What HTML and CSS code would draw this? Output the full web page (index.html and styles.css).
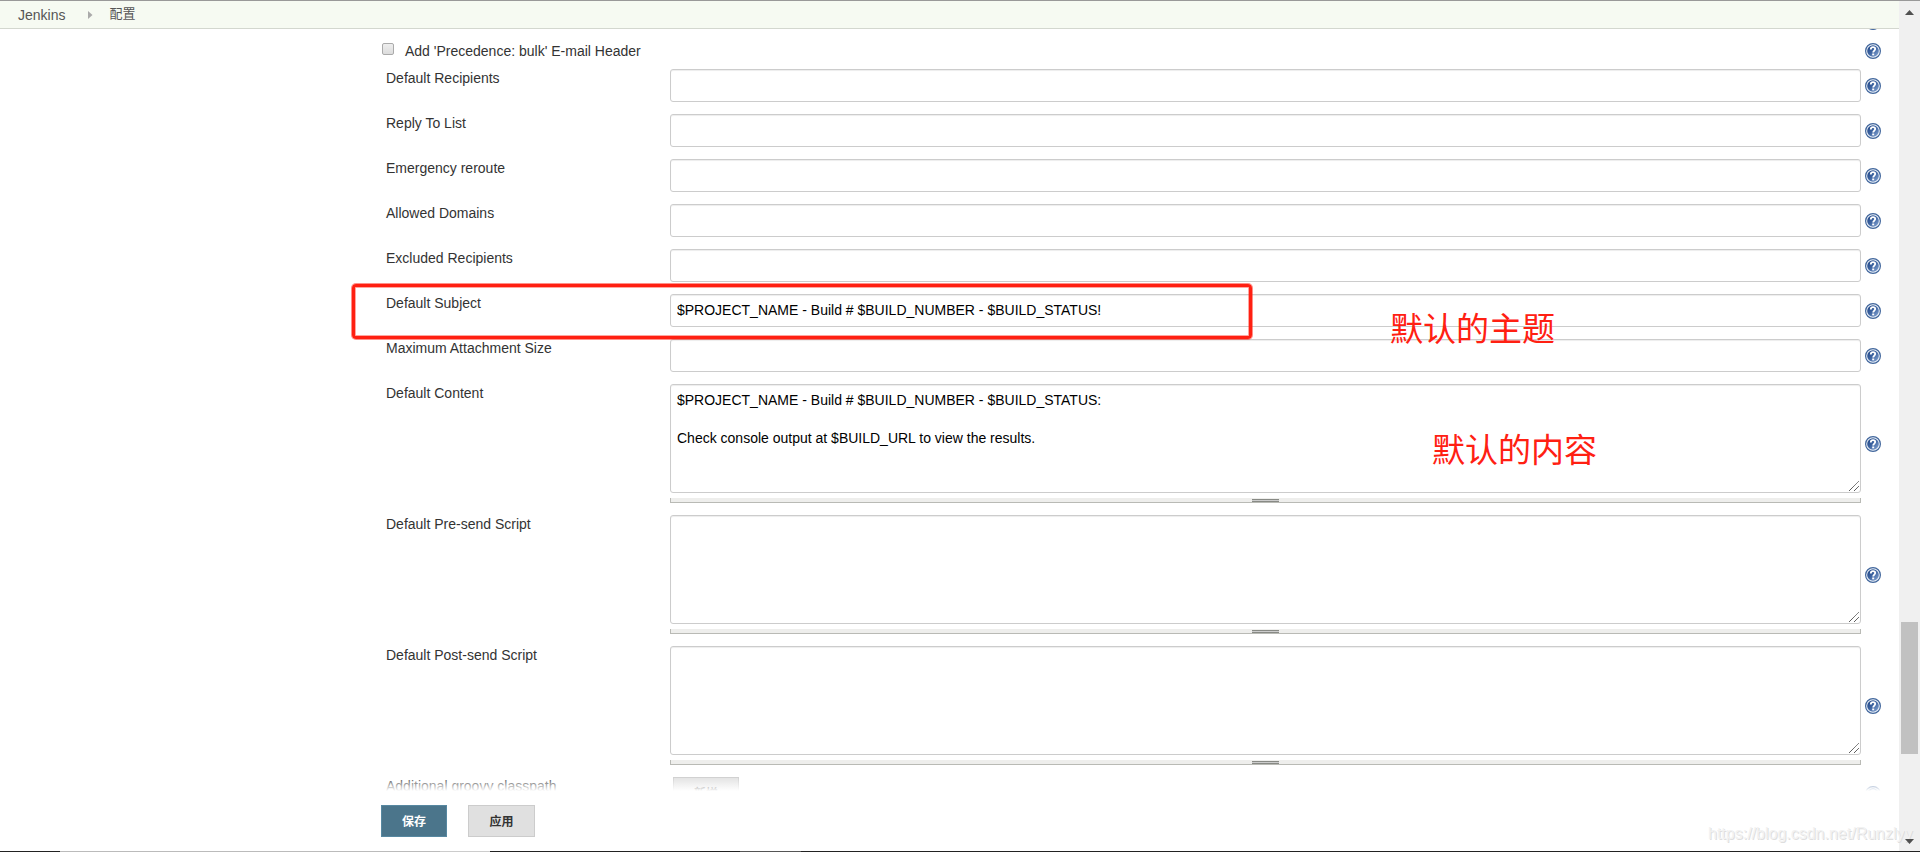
FILE: index.html
```
<!DOCTYPE html>
<html lang="zh">
<head>
<meta charset="utf-8">
<title>配置 [Jenkins]</title>
<link rel="stylesheet" href="styles.css">
</head>
<body>
<svg class="defs" width="0" height="0">
  <defs>
    <linearGradient id="ball" x1="0" y1="0" x2="1" y2="1">
      <stop offset="0" stop-color="#1f4484"/>
      <stop offset=".45" stop-color="#3a619f"/>
      <stop offset="1" stop-color="#8aa8d4"/>
    </linearGradient>
    <symbol id="help" viewBox="0 0 16 16">
      <circle cx="8" cy="8" r="7.4" fill="#eef3f9" stroke="#41669c" stroke-width="1.2"/>
      <circle cx="8" cy="8" r="5.8" fill="url(#ball)"/>
      <path d="M5.8 6.4C5.8 4.9 6.7 4.2 8 4.2S10.200 4.900 10.200 6.100C10.200 7.500 8.200 7.700 8.200 9.600" fill="none" stroke="#fff" stroke-width="1.8"/>
      <path d="M7.200 10.500H9.200V12.300H7.200Z" fill="#fff"/>
    </symbol>
    <symbol id="grip" viewBox="0 0 10 10">
      <path d="M0 10L10 0M5 10l5-5" fill="none" stroke="#444" stroke-width="1" stroke-dasharray="1.2 .3"/>
    </symbol>
  </defs>
</svg>

<div class="window">
  <div class="page">
    <header class="breadcrumbs">
      <span>Jenkins</span>
      <svg width="5" height="8" viewBox="0 0 5 8"><path d="M0 0l4.500 4L0 8z" fill="#aaa"/></svg>
      <span class="crumb-cn">配置</span>
    </header>

    <main class="config">
      <div class="row row-check">
        <label class="check"><i class="checkbox"></i>Add 'Precedence: bulk' E-mail Header</label>
        <svg class="help"><use href="#help"/></svg>
        <svg class="help help-prev"><use href="#help"/></svg>
      </div>
      <div class="row">
        <label class="name">Default Recipients</label>
        <input class="setting" type="text">
        <svg class="help"><use href="#help"/></svg>
      </div>
      <div class="row">
        <label class="name">Reply To List</label>
        <input class="setting" type="text">
        <svg class="help"><use href="#help"/></svg>
      </div>
      <div class="row">
        <label class="name">Emergency reroute</label>
        <input class="setting" type="text">
        <svg class="help"><use href="#help"/></svg>
      </div>
      <div class="row">
        <label class="name">Allowed Domains</label>
        <input class="setting" type="text">
        <svg class="help"><use href="#help"/></svg>
      </div>
      <div class="row">
        <label class="name">Excluded Recipients</label>
        <input class="setting" type="text">
        <svg class="help"><use href="#help"/></svg>
      </div>
      <div class="row">
        <label class="name">Default Subject</label>
        <input class="setting" type="text" value="$PROJECT_NAME - Build # $BUILD_NUMBER - $BUILD_STATUS!">
        <svg class="help"><use href="#help"/></svg>
      </div>
      <div class="row">
        <label class="name">Maximum Attachment Size</label>
        <input class="setting" type="text">
        <svg class="help"><use href="#help"/></svg>
      </div>
      <div class="row row-area">
        <label class="name">Default Content</label>
        <div class="area">
          <textarea class="setting">$PROJECT_NAME - Build # $BUILD_NUMBER - $BUILD_STATUS:

Check console output at $BUILD_URL to view the results.</textarea>
          <svg class="grip"><use href="#grip"/></svg>
          <div class="handle"><i></i></div>
        </div>
        <svg class="help"><use href="#help"/></svg>
      </div>
      <div class="row row-area">
        <label class="name">Default Pre-send Script</label>
        <div class="area">
          <textarea class="setting"></textarea>
          <svg class="grip"><use href="#grip"/></svg>
          <div class="handle"><i></i></div>
        </div>
        <svg class="help"><use href="#help"/></svg>
      </div>
      <div class="row row-area">
        <label class="name">Default Post-send Script</label>
        <div class="area">
          <textarea class="setting"></textarea>
          <svg class="grip"><use href="#grip"/></svg>
          <div class="handle"><i></i></div>
        </div>
        <svg class="help"><use href="#help"/></svg>
      </div>
      <div class="row">
        <label class="name">Additional groovy classpath</label>
        <div class="add"><button class="btn">新增</button></div>
        <svg class="help"><use href="#help"/></svg>
      </div>
    </main>

    <!-- sticky save bar, form fades out above it -->
    <footer class="bottom">
      <button class="btn primary">保存</button>
      <button class="btn">应用</button>
    </footer>
  </div>

  <aside class="scrollbar">
    <svg width="9" height="5" viewBox="0 0 9 5"><path d="M0 5L4.500 0 9 5z" fill="#505050"/></svg>
    <div class="thumb"></div>
    <svg width="9" height="5" viewBox="0 0 9 5"><path d="M0 0l4.500 5L9 0z" fill="#505050"/></svg>
  </aside>

  <div class="mark-box"></div>
  <div class="mark mark-subject">默认的主题</div>
  <div class="mark mark-content">默认的内容</div>
  <div class="watermark">https://blog.csdn.net/Runzlyy</div>
  <div class="taskbar"></div>
</div>
</body>
</html>
```
FILE: styles.css
```
* {
    box-sizing: border-box;
}

body {
    margin: 0;
    font-family: "Liberation Sans", Arial, "Noto Sans CJK SC", sans-serif;
    font-size: 14px;
    color: #333;
    background: #fff;
}

svg {
    display: block;
}

.defs {
    position: absolute;
}

.window {
    position: relative;
    display: flex;
    height: 852px;
    border-top: 1px solid #999;
    overflow: hidden;
}

.page {
    flex: 1;
    display: flex;
    flex-direction: column;
    min-width: 0;
}

.breadcrumbs {
    display: flex;
    flex: none;
    align-items: center;
    height: 28px;
    padding-left: 18px;
    border-bottom: 1px solid #d3d7cf;
    background: #f6faf2;
    color: #555;
}

.breadcrumbs svg {
    margin: 1px 16px 0 23px;
}

.crumb-cn {
    font-size: 13px;
    line-height: 18px;
    padding-bottom: 1px;
}

/* form */
.config {
    flex: 1;
    min-height: 0;
    overflow: hidden;
    padding-left: 386px;
}

.row {
    position: relative;
    display: flex;
    align-items: flex-start;
    height: 45px;
}

.row-check {
    height: 40px;
}

.row-area {
    height: 131px;
}

.check {
    display: flex;
    width: 1479px;
    margin: 14px 4px 0 -4px;
}

.checkbox {
    width: 12px;
    height: 12px;
    margin-right: 11px;
    border: 1px solid #aaa;
    border-radius: 2px;
    background: linear-gradient(#eee, #dcdcdc);
}

.name {
    width: 284px;
    padding-top: 1px;
}

.setting {
    display: block;
    width: 1191px;
    height: 33px;
    margin: 0;
    padding: 5px 6px 7px;
    border: 1px solid #ccc;
    border-radius: 3px;
    outline: 0;
    background: #fff;
    box-shadow: inset 0 1px 1px rgba(0, 0, 0, .075);
    font: 14px/19px "Liberation Sans", Arial, sans-serif;
    color: #000;
}

textarea.setting {
    height: 109px;
    padding: 6px;
    resize: none;
    overflow: hidden;
}

.area {
    position: relative;
    width: 1191px;
}

.grip {
    position: absolute;
    top: 97px;
    right: 2px;
    width: 10px;
    height: 10px;
}

.handle {
    display: flex;
    justify-content: center;
    height: 5px;
    margin-top: 5px;
    border: 1px solid #b9bab5;
    border-top: 0;
    background: #eeeeec;
}

.handle i {
    width: 27px;
    height: 3px;
    margin-top: 1px;
    border-top: 1px solid #888a85;
    border-bottom: 1px solid #888a85;
    background: #ccc;
}

.help {
    flex: none;
    width: 16px;
    height: 16px;
    margin: 9px 0 0 4px;
}

.row-check .help {
    margin: 14px 0 0 0;
}

.row-check .help-prev {
    position: absolute;
    left: 1479px;
    top: -29px;
}

.row-area .help {
    margin-top: 52px;
}

.add {
    width: 1191px;
    padding-left: 3px;
}

.btn {
    width: 67px;
    height: 32px;
    padding: 0 0 2px;
    border: 1px solid #ccc;
    background: #e0e0e0;
    color: #333;
    font: bold 12px "Noto Sans CJK SC", sans-serif;
}

.add .btn {
    width: 66px;
}

.primary {
    width: 66px;
    border-color: #5788a1;
    background: #4b758b;
    color: #fff;
}

.bottom {
    position: relative;
    display: flex;
    flex: none;
    gap: 21px;
    height: 61px;
    padding: 14px 0 0 381px;
    background: #fff;
}

.bottom::before {
    content: "";
    position: absolute;
    left: 0;
    right: 0;
    top: -15px;
    height: 15px;
    background: linear-gradient(rgba(255, 255, 255, 0), #fff);
}

/* window scrollbar */
.scrollbar {
    display: flex;
    flex-direction: column;
    align-items: center;
    width: 21px;
    padding: 9px 0 8px;
    background: #f0f0f0;
}

.scrollbar svg {
    position: relative;
    z-index: 1;
}

.thumb {
    width: 17px;
    height: 132px;
    margin: 607px 0 auto;
    background: #c1c1c1;
}

/* notes drawn over the form */
.mark-box {
    position: absolute;
    left: 352px;
    top: 283px;
    width: 900px;
    height: 55px;
    border: 3px solid #ff2012;
    border-radius: 4px;
    box-shadow: 0 0 0 1px rgba(255, 32, 18, .5), inset 0 0 0 1px rgba(255, 32, 18, .4);
}

.mark {
    position: absolute;
    font: 33px/40px "Noto Sans CJK SC", sans-serif;
    color: #ff2012;
    white-space: nowrap;
}

.mark-subject {
    left: 1390px;
    top: 306px;
}

.mark-content {
    left: 1432px;
    top: 427px;
}

.watermark {
    position: absolute;
    left: 1708px;
    top: 824px;
    font-size: 16px;
    line-height: 18px;
    color: #f2f2f2;
    text-shadow: 1px 1px 0 #dedede;
}

.taskbar {
    position: absolute;
    left: 0;
    right: 0;
    bottom: 0;
    height: 1px;
    background: linear-gradient(to right, #222 60px, #bbb 60px, #bbb 440px, #ccc 440px, #ccc 490px, #222 490px, #222 740px, #555 740px, #555 801px, #222 801px);
}
```
